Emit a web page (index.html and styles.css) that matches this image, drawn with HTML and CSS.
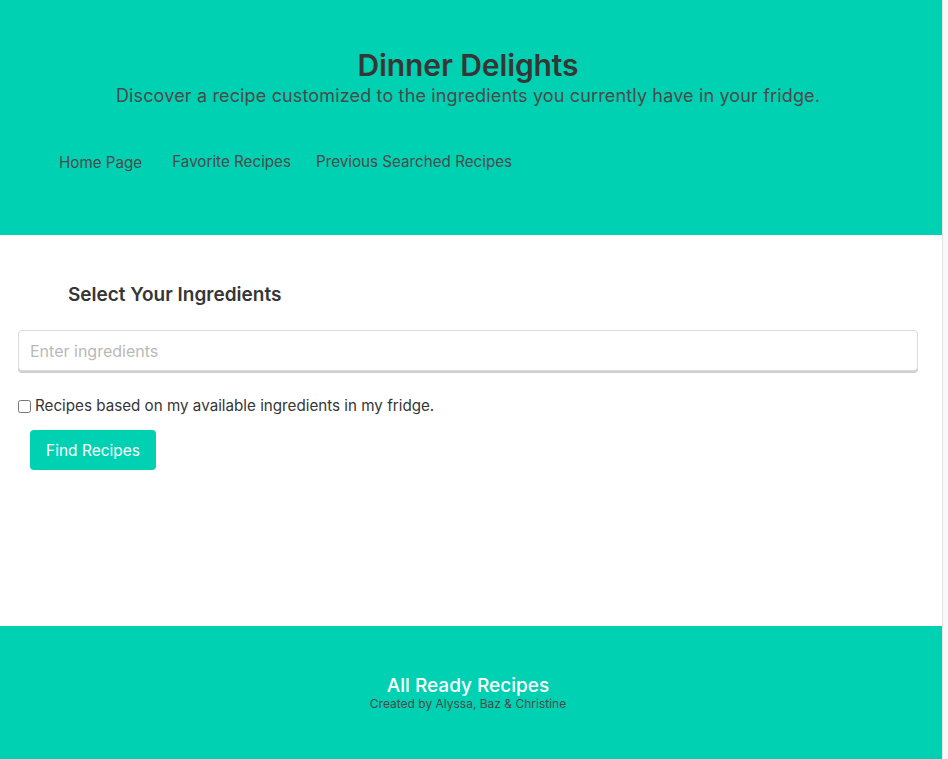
FILE: index.html
```html
<!DOCTYPE html>
<html lang="en">
<head>
<meta charset="utf-8">
<title>Dinner Delights</title>
<link rel="stylesheet" href="styles.css">
</head>
<body>
<div class="page">
  <header class="hero">
    <h1 class="title">Dinner Delights</h1>
    <p class="subtitle">Discover a recipe customized to the ingredients you currently have in your fridge.</p>
    <nav class="nav">
      <a class="nav-item nav-home" href="#">Home Page</a>
      <a class="nav-item" href="#">Favorite Recipes</a>
      <a class="nav-item" href="#">Previous Searched Recipes</a>
    </nav>
  </header>
  <main class="main">
    <h2 class="section-title">Select Your Ingredients</h2>
    <input class="input" type="text" placeholder="Enter ingredients">
    <label class="check"><input type="checkbox" class="checkbox"> Recipes based on my available ingredients in my fridge.</label>
    <button class="button">Find Recipes</button>
  </main>
  <footer class="footer">
    <p class="footer-title">All Ready Recipes</p>
    <p class="footer-sub">Created by Alyssa, Baz &amp; Christine</p>
  </footer>
</div>
<div class="scrollbar"></div>
</body>
</html>
```
FILE: styles.css
```css
html, body {
  margin: 0;
  padding: 0;
}
body {
  display: flex;
  min-height: 759px;
  font-family: Inter, "Noto Sans", sans-serif;
  color: #363636;
  background: #fff;
}
.page {
  flex: 1;
  display: flex;
  flex-direction: column;
  min-width: 0;
}
.scrollbar {
  width: 5px;
  background: #f9f9f9;
  border-left: 1px solid #e4e4e4;
}
.hero {
  background: #00d1b2;
  height: 235px;
  box-sizing: border-box;
  padding: 46px 6px 0 0;
  text-align: center;
}
.title {
  margin: 0;
  font-size: 30px;
  font-weight: 600;
  line-height: 38px;
  color: #363636;
  letter-spacing: -0.1px;
}
.subtitle {
  margin: 0;
  font-size: 18px;
  line-height: 24px;
  color: #4a4a4a;
  font-weight: 400;
  letter-spacing: 0.15px;
}
.nav {
  display: flex;
  gap: 25px;
  padding: 42px 0 0 59px;
  text-align: left;
}
.nav-item {
  font-size: 15.2px;
  line-height: 24px;
  color: #4a4a4a;
  text-decoration: none;
}
.nav-home {
  margin-right: 5px;
  position: relative;
  top: 1px;
}
.main {
  flex: 1;
  padding: 48px 24px 0 18px;
  display: flex;
  flex-direction: column;
  align-items: flex-start;
}
.section-title {
  margin: 0 0 0 50px;
  font-size: 19px;
  font-weight: 600;
  line-height: 24px;
  color: #363636;
}
.input {
  margin-top: 23px;
  box-sizing: border-box;
  width: 900px;
  height: 41px;
  border: 1px solid #dbdbdb;
  border-radius: 4px;
  box-shadow: 0 2px 0 #d0d0d0;
  padding: 0 11px;
  font-family: inherit;
  font-size: 16px;
  color: #363636;
  outline: none;
}
.input::placeholder {
  color: #b9b9b9;
}
.check {
  margin-top: 25px;
  display: flex;
  align-items: center;
  font-size: 15.2px;
  line-height: 20px;
  color: #363636;
}
.checkbox {
  margin: 0 4px 0 0;
  width: 13px;
  height: 13px;
}
.button {
  margin: 14px 0 0 12px;
  height: 40px;
  padding: 0 16px;
  border: none;
  border-radius: 4px;
  background: #00d1b2;
  color: #fff;
  font-family: inherit;
  font-size: 15.5px;
}
.footer {
  background: #00d1b2;
  height: 133px;
  box-sizing: border-box;
  padding: 49px 6px 0 0;
  text-align: center;
}
.footer-title {
  margin: 0;
  font-size: 19px;
  line-height: 22px;
  font-weight: 500;
  color: #fff;
}
.footer-sub {
  margin: 0;
  font-size: 12px;
  line-height: 14px;
  color: #4a4a4a;
}
```
